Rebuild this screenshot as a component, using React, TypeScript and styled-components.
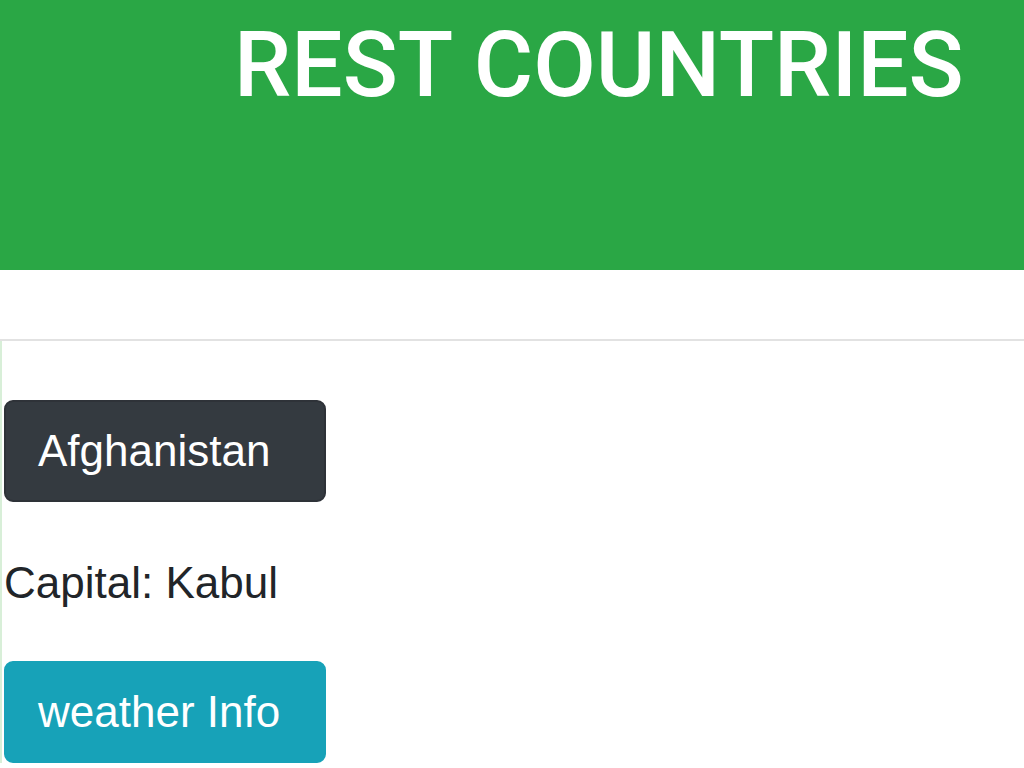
import styled, { createGlobalStyle } from 'styled-components';

const GlobalStyle = createGlobalStyle`
  body {
    margin: 0;
    font-family: "Liberation Sans", Arial, sans-serif;
    color: #212529;
    background: #fff;
  }
`;

const country = { name: 'Afghanistan', capital: 'Kabul' };

export default function App() {
  return (
    <>
      <GlobalStyle />
      <Header>
        <Title>REST COUNTRIES</Title>
      </Header>
      <Divider />
      <Card>
        <Button $variant="dark">{country.name}</Button>
        <Capital>Capital: {country.capital}</Capital>
        <Button $variant="info">weather Info</Button>
      </Card>
    </>
  );
}

const Header = styled.header`
  height: 270px;
  background: #2aa745;
  padding: 0 0 0 234px;
  box-sizing: border-box;
`;

const Title = styled.h1`
  margin: 0;
  padding-top: 11px;
  font-family: Roboto, "Liberation Sans", sans-serif;
  font-size: 91px;
  font-weight: 500;
  line-height: 1.2;
  color: #fff;
  letter-spacing: 0;
  white-space: nowrap;
`;

const Divider = styled.hr`
  margin: 69px 0 0;
  border: 0;
  border-top: 2px solid #e2e2e2;
`;

const Card = styled.section`
  display: flex;
  flex-direction: column;
  align-items: flex-start;
  padding: 59px 0 0 2px;
  border-left: 2px solid #d8efd8;
`;

const Button = styled.button<{ $variant: 'dark' | 'info' }>`
  font-family: inherit;
  font-size: 44px;
  line-height: 66px;
  padding: 16px 32px;
  border-radius: 9px;
  border: 2px solid ${(p) => (p.$variant === 'dark' ? '#2e3238' : '#17a2b8')};
  background: ${(p) => (p.$variant === 'dark' ? '#343a40' : '#17a2b8')};
  color: #fff;
  width: 322px;
  text-align: left;
  white-space: nowrap;
`;

const Capital = styled.p`
  margin: 48px 0 45px;
  font-size: 44px;
  line-height: 1.5;
`;
